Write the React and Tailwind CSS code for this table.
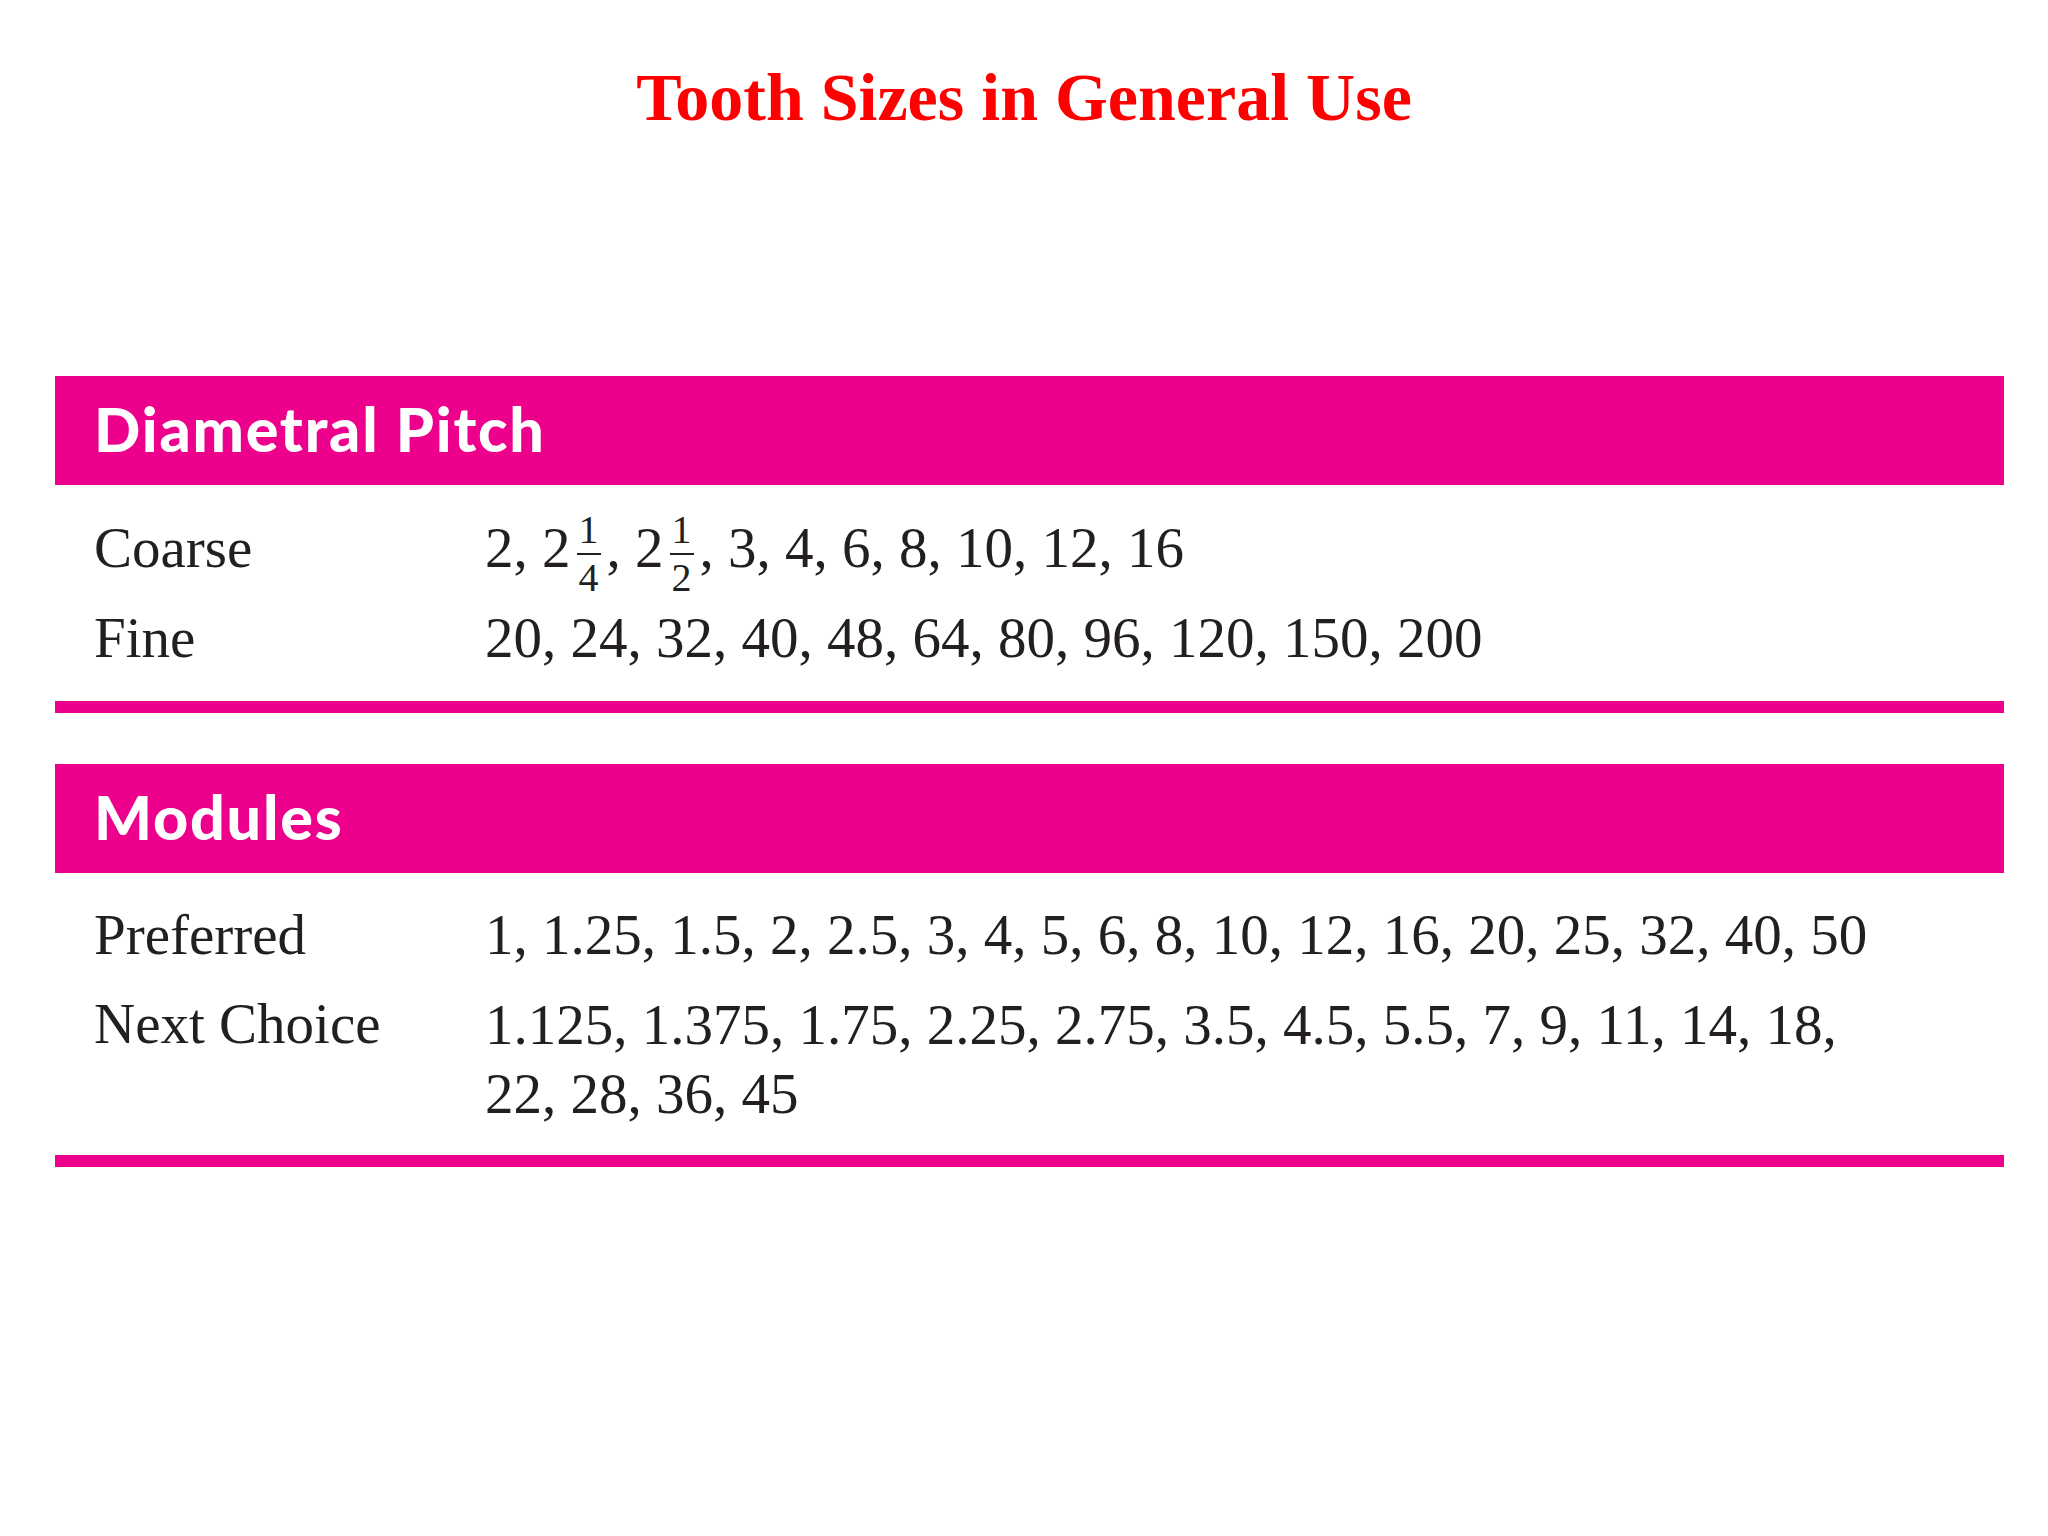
const SERIF = "font-['Liberation_Serif','Times_New_Roman',serif]"

function Frac({ top, bottom }) {
  return (
    <span className="inline-flex flex-col items-center align-middle -my-[14px] ml-[6px] mr-[6px] text-[40px] leading-[40px]">
      <span>{top}</span>
      <span className="block w-[24px] h-[2px] bg-[#231f20] my-[3px]" />
      <span>{bottom}</span>
    </span>
  )
}

function Header({ children }) {
  return (
    <div className="h-[109px] bg-[#ec008c] pl-[39px] pt-[22px]">
      <span className="font-['Lato',sans-serif] font-black text-[61px] leading-none tracking-[1.8px] text-white">{children}</span>
    </div>
  )
}

function Row({ label, children }) {
  return (
    <div className="flex">
      <div className="w-[391px] shrink-0">{label}</div>
      <div>{children}</div>
    </div>
  )
}

export default function App() {
  return (
    <div className={`w-[2048px] h-[1536px] bg-white text-[#231f20] ${SERIF}`}>
      {/* Title */}
      <h1 className="pt-[63px] text-center text-[68px] leading-none font-bold text-[#ff0000]">
        Tooth Sizes in General Use
      </h1>

      <div className="ml-[55px] w-[1949px] mt-[245px]">
        {/* Diametral pitch */}
        <Header>Diametral Pitch</Header>
        <div className="pl-[39px] pt-[29px] pb-[29px] flex flex-col gap-[20px] text-[57px] leading-[68px]">
          <Row label="Coarse">
            2, 2<Frac top="1" bottom="4" />, 2<Frac top="1" bottom="2" />, 3, 4, 6, 8, 10, 12, 16
          </Row>
          <Row label="Fine">20, 24, 32, 40, 48, 64, 80, 96, 120, 150, 200</Row>
        </div>
        <div className="h-[12px] bg-[#ec008c]" />

        {/* Modules */}
        <div className="mt-[51px]">
          <Header>Modules</Header>
        </div>
        <div className="pl-[39px] pt-[28px] pb-[27px] flex flex-col gap-[21px] text-[57px] leading-[68px]">
          <Row label="Preferred">1, 1.25, 1.5, 2, 2.5, 3, 4, 5, 6, 8, 10, 12, 16, 20, 25, 32, 40, 50</Row>
          <Row label="Next Choice">
            <span className="block leading-[69px]">1.125, 1.375, 1.75, 2.25, 2.75, 3.5, 4.5, 5.5, 7, 9, 11, 14, 18,</span>
            <span className="block leading-[69px]">22, 28, 36, 45</span>
          </Row>
        </div>
        <div className="h-[12px] bg-[#ec008c]" />
      </div>
    </div>
  )
}
